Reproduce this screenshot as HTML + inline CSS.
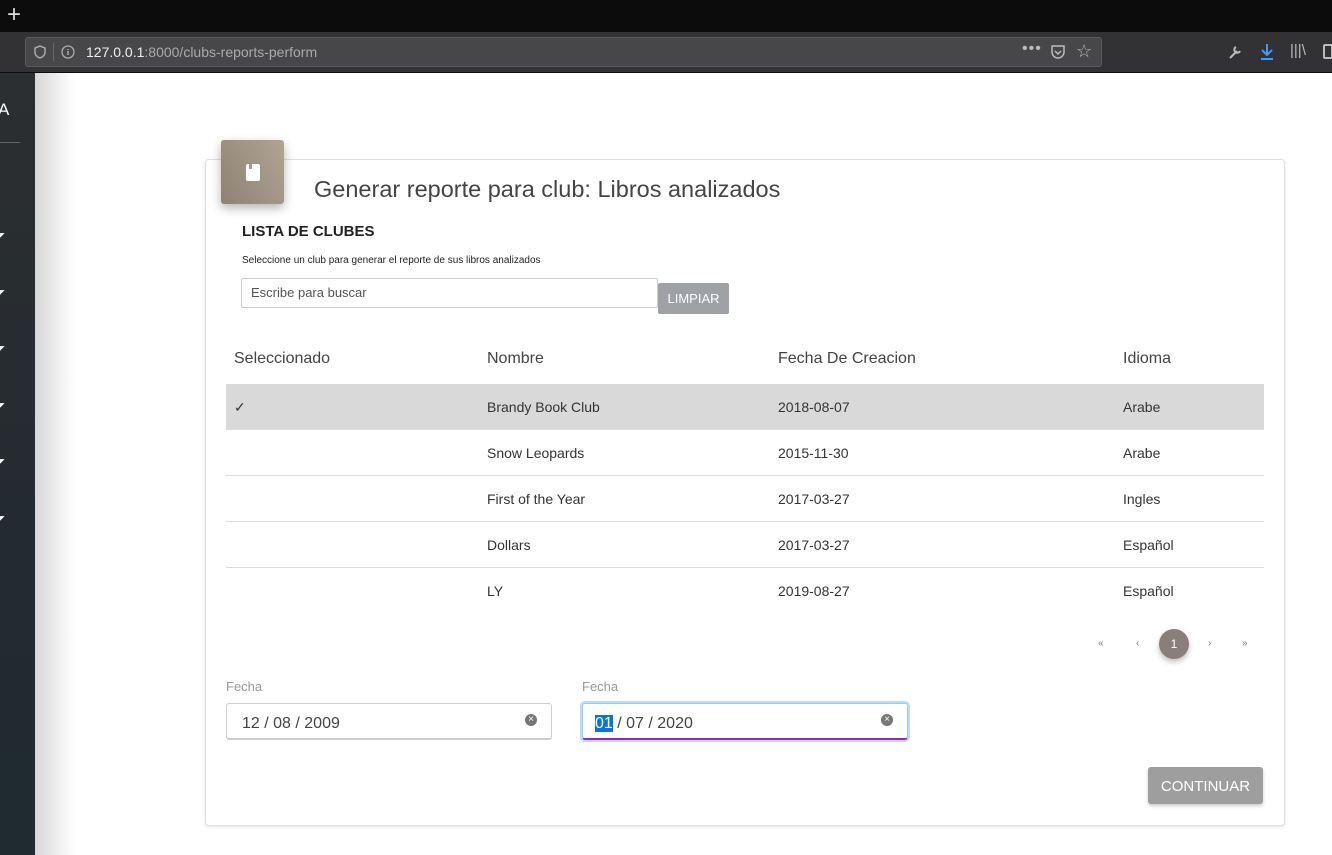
<!DOCTYPE html>
<html><head><meta charset="utf-8"><style>
*{box-sizing:border-box;margin:0;padding:0}
body{width:1332px;height:855px;overflow:hidden;font-family:"Liberation Sans",sans-serif;background:#fff;position:relative}
.top{position:absolute;left:0;top:0;width:1332px;height:32px;background:#0c0c0d}
.nav{position:absolute;left:0;top:32px;width:1332px;height:41px;background:#323234;border-bottom:1px solid #0c0c0d}
.url{position:absolute;left:25px;top:5px;width:1077px;height:30px;background:#474749;border:1px solid #5a5a5c;border-radius:3px;color:#aaa;font-size:14px;line-height:28px}
.side{position:absolute;left:0;top:73px;width:35px;height:782px;background:linear-gradient(#2c2f31,#252b30 50%,#1f2a31)}
.shadow{position:absolute;left:35px;top:73px;width:40px;height:782px;background:linear-gradient(90deg,#d8d8d8,#fff)}
.card{position:absolute;left:205px;top:159px;width:1080px;height:667px;border:1px solid #e0e0e0;border-radius:4px;box-shadow:0 1px 3px rgba(0,0,0,.12);background:#fff}
.icon{position:absolute;left:221px;top:140px;width:63px;height:64px;border-radius:3px;background:linear-gradient(60deg,#8d8273,#b0a595);box-shadow:0 4px 10px rgba(0,0,0,.3)}
.t{position:absolute;white-space:nowrap}
.row{position:absolute;left:226px;width:1038px;height:46px;border-bottom:1px solid #ddd;font-size:14px;color:#333}
.row span{position:absolute;top:15px}
.date{position:absolute;top:703px;width:326px;height:37px;border:1px solid #ccc;border-bottom:2px solid #ccc;border-radius:3px;font-size:16px;color:#444;padding:11px 0 0 15px}
.x{position:absolute;right:14px;top:10px;width:12px;height:12px;border-radius:50%;background:#777;color:#fff;font-size:10px;line-height:12px;text-align:center}
</style></head><body>
<div class="top"><div class="t" style="left:7px;top:1px;color:#ddd;font-size:24px">+</div></div>
<div class="nav"><div class="url">
<svg style="position:absolute;left:7px;top:7px" width="14" height="14"><path d="M7 1L2 3v4c0 3 2 5 5 6 3-1 5-3 5-6V3z" fill="none" stroke="#aaa" stroke-width="1.5"/></svg>
<div style="position:absolute;left:27px;top:5px;width:1px;height:18px;background:#666"></div>
<svg style="position:absolute;left:35px;top:7px" width="14" height="14"><circle cx="7" cy="7" r="6" fill="none" stroke="#aaa" stroke-width="1.3"/><path d="M7 6v4M7 4v1" stroke="#aaa" stroke-width="1.5"/></svg>
<span style="position:absolute;left:60px;top:0"><span style="color:#eee">127.0.0.1</span>:8000/clubs-reports-perform</span>
<span style="position:absolute;left:996px;top:-3px;color:#bbb;font-size:16px;letter-spacing:1px">•••</span>
<svg style="position:absolute;left:1024px;top:6px" width="16" height="16"><path d="M2 2h12v6a6 6 0 0 1-12 0z" fill="none" stroke="#bbb" stroke-width="1.5"/><path d="M5 7l3 3 3-3" fill="none" stroke="#bbb" stroke-width="1.5"/></svg>
<span style="position:absolute;left:1050px;top:-1px;color:#bbb;font-size:18px">☆</span>
</div>
<svg style="position:absolute;left:1227px;top:12px" width="16" height="16"><path d="M3 14l7-7M9 3a3 3 0 1 0 4 4" stroke="#bbb" stroke-width="2" fill="none"/></svg>
<svg style="position:absolute;left:1259px;top:11px" width="16" height="18"><path d="M8 1v11M3 7l5 5 5-5M2 16h12" stroke="#3b9cff" stroke-width="2" fill="none"/></svg>
<span style="position:absolute;left:1290px;top:10px;color:#bbb;font-size:15px">|||\</span>
<div style="position:absolute;left:1323px;top:12px;width:10px;height:15px;border:2px solid #bbb;border-radius:2px"></div>
</div>
<div class="side"><div class="t" style="left:-2px;top:27px;color:#fff;font-size:17px">A</div>
<div style="position:absolute;left:0;top:69px;width:20px;height:1px;background:#666"></div>
<div style="position:absolute;left:0;top:135px;color:#fff;font-size:6px;line-height:56.5px">◤<br>◤<br>◤<br>◤<br>◤<br>◤</div></div>
<div class="shadow"></div>
<div class="card"></div>
<div class="icon"><div style="position:absolute;left:25px;top:24px;width:14px;height:17px;background:#fff;border-radius:2px"><div style="position:absolute;left:3px;top:0;width:3px;height:5px;background:#a59a8a"></div></div></div>
<div class="t" style="left:314px;top:176px;font-size:23.5px;color:#444">Generar reporte para club: Libros analizados</div>
<div class="t" style="left:242px;top:223px;font-size:15px;font-weight:bold;color:#222">LISTA DE CLUBES</div>
<div class="t" style="left:242px;top:255px;font-size:10px;color:#222">Seleccione un club para generar el reporte de sus libros analizados</div>
<div style="position:absolute;left:241px;top:278px;width:417px;height:30px;border:1px solid #ccc;border-radius:2px;font-size:13px;color:#555;padding:6px 9px">Escribe para buscar</div>
<div style="position:absolute;left:658px;top:283px;width:71px;height:31px;background:#9ea1a6;border-radius:2px;color:#fff;font-size:13px;text-align:center;line-height:31px">LIMPIAR</div>
<div class="t" style="left:234px;top:350px;font-size:16px;color:#444">Seleccionado</div>
<div class="t" style="left:487px;top:350px;font-size:16px;color:#444">Nombre</div>
<div class="t" style="left:778px;top:350px;font-size:16px;color:#444">Fecha De Creacion</div>
<div class="t" style="left:1123px;top:350px;font-size:16px;color:#444">Idioma</div>
<div class="row" style="top:384px;background:#d9d9d9"><span style="left:8px">✓</span><span style="left:261px">Brandy Book Club</span><span style="left:552px">2018-08-07</span><span style="left:897px">Arabe</span></div>
<div class="row" style="top:430px"><span style="left:261px">Snow Leopards</span><span style="left:552px">2015-11-30</span><span style="left:897px">Arabe</span></div>
<div class="row" style="top:476px"><span style="left:261px">First of the Year</span><span style="left:552px">2017-03-27</span><span style="left:897px">Ingles</span></div>
<div class="row" style="top:522px"><span style="left:261px">Dollars</span><span style="left:552px">2017-03-27</span><span style="left:897px">Español</span></div>
<div class="row" style="top:568px;border:none"><span style="left:261px">LY</span><span style="left:552px">2019-08-27</span><span style="left:897px">Español</span></div>
<div class="t" style="left:1098px;top:638px;font-size:10px;color:#777">«</div>
<div class="t" style="left:1136px;top:638px;font-size:10px;color:#777">‹</div>
<div style="position:absolute;left:1159px;top:629px;width:30px;height:30px;border-radius:50%;background:#8a7e7b;color:#fff;font-size:12px;text-align:center;line-height:30px;box-shadow:0 3px 6px rgba(0,0,0,.25)">1</div>
<div class="t" style="left:1208px;top:638px;font-size:10px;color:#777">›</div>
<div class="t" style="left:1242px;top:638px;font-size:10px;color:#777">»</div>
<div class="t" style="left:226px;top:679px;font-size:13px;color:#999">Fecha</div>
<div class="t" style="left:582px;top:679px;font-size:13px;color:#999">Fecha</div>
<div class="date" style="left:226px">12 / 08 / 2009<div class="x">×</div></div>
<div class="date" style="left:582px;border:1px solid #9cc9f5;border-bottom:2px solid #9c27b0;box-shadow:0 0 0 2px #b9dcfb;padding-left:12px"><span style="background:#0a74da;color:#fff">01</span> / 07 / 2020<div class="x">×</div></div>
<div style="position:absolute;left:1148px;top:767px;width:115px;height:37px;background:#9e9e9e;border-radius:3px;color:#fff;font-size:15px;text-align:center;line-height:40px;box-shadow:0 2px 3px rgba(0,0,0,.2)">CONTINUAR</div>
</body></html>
